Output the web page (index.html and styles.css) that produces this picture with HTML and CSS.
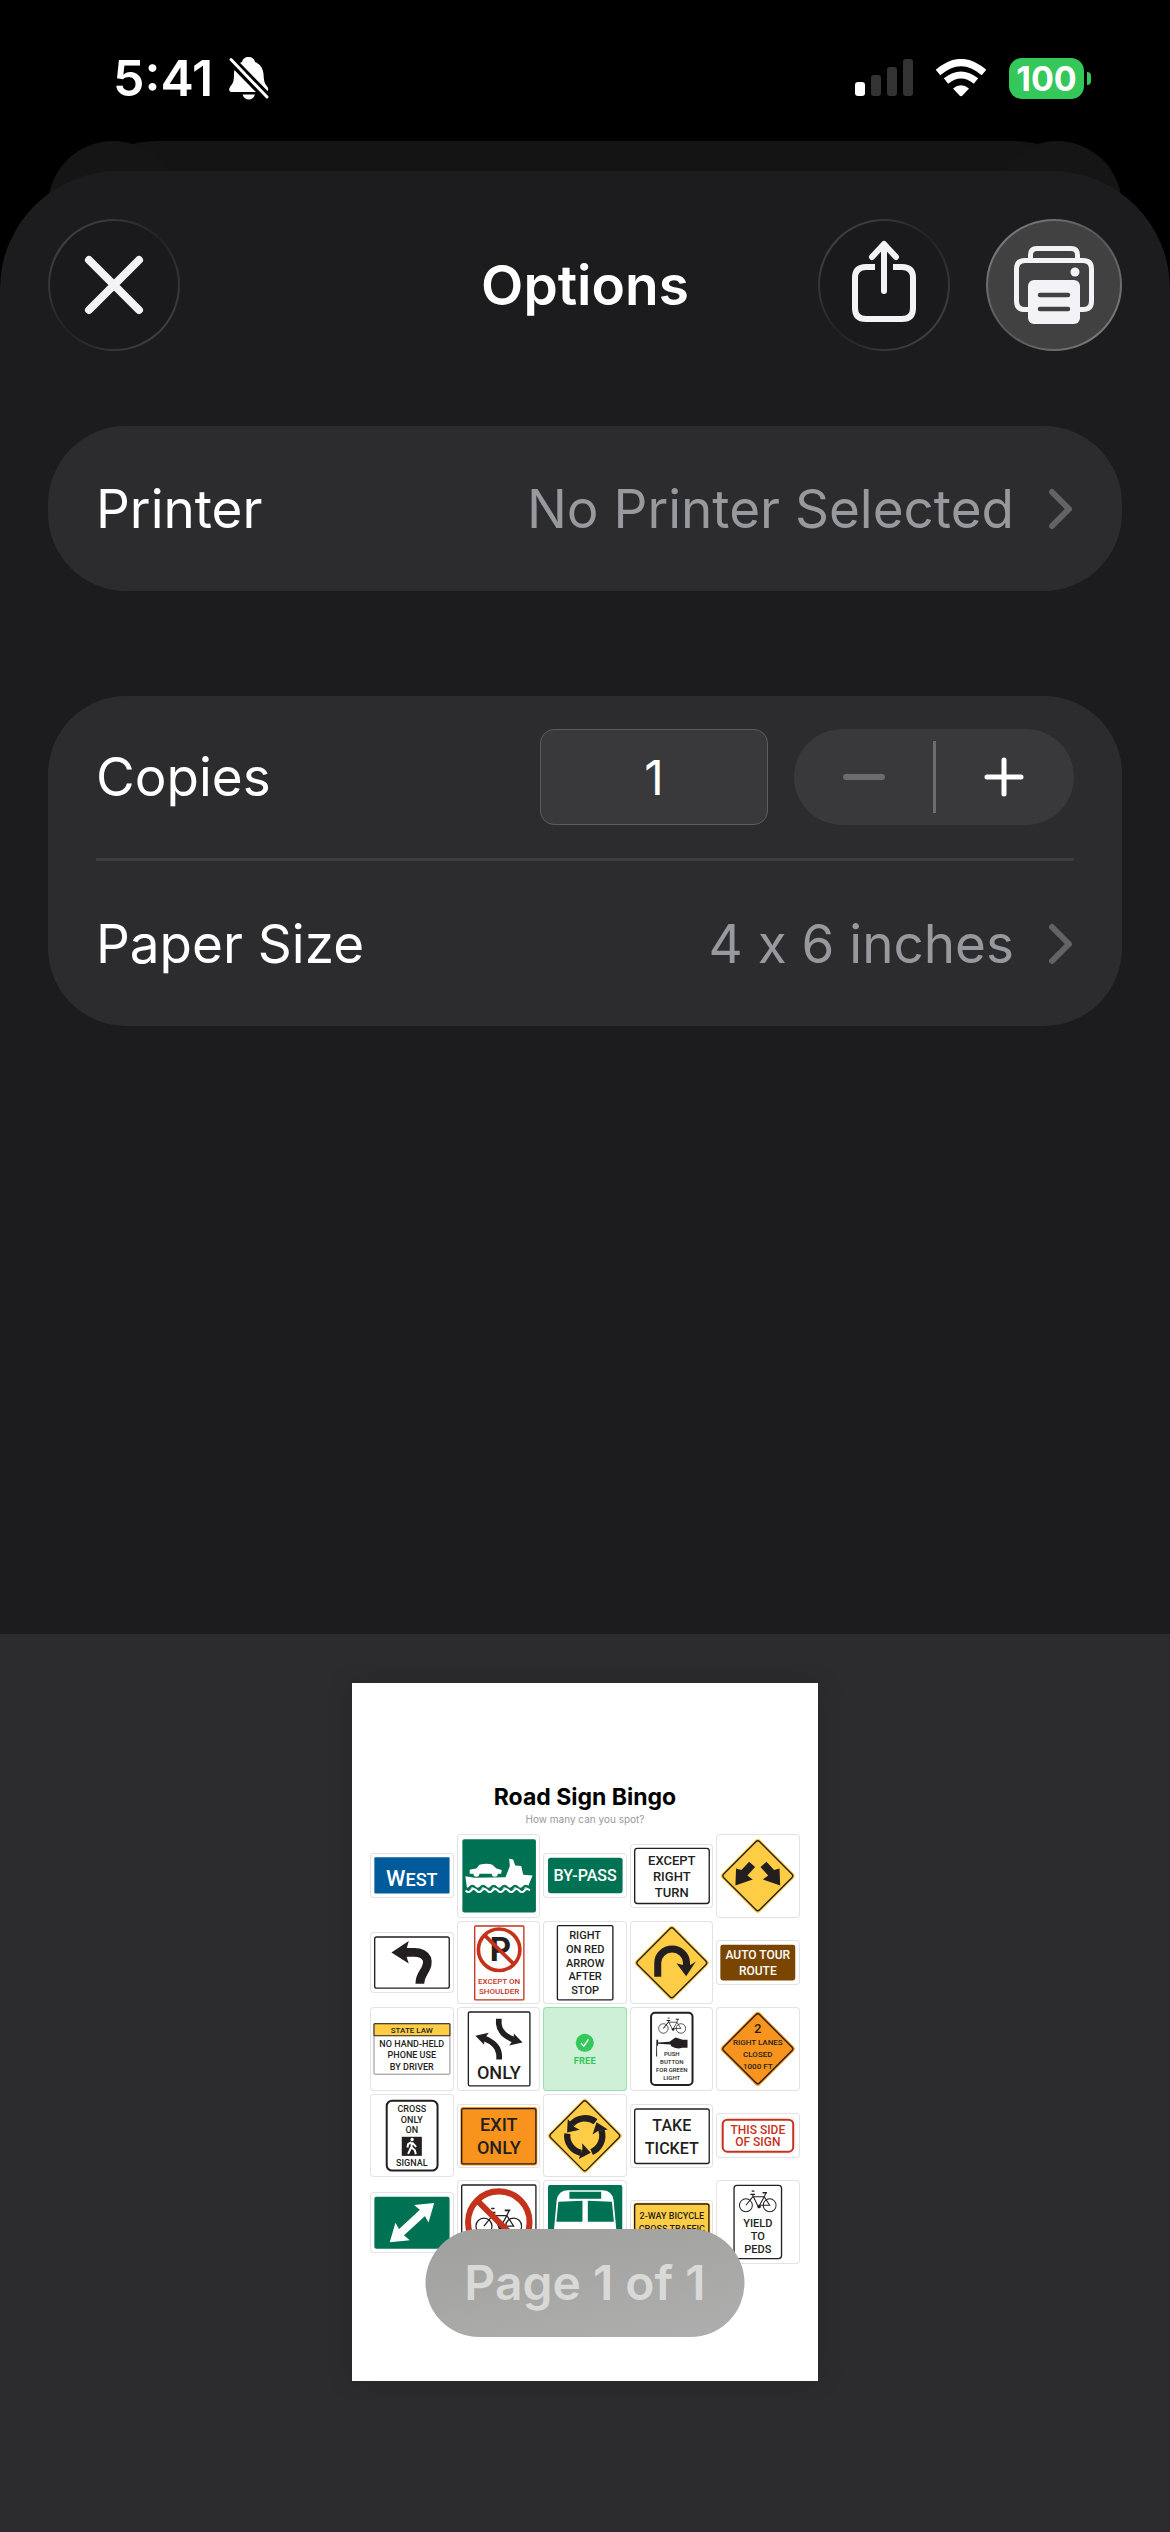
FILE: index.html
```
<!DOCTYPE html>
<html lang="en">
<head>
    <meta charset="utf-8">
    <meta name="viewport" content="width=device-width, initial-scale=1">
    <title>Print Options</title>
    <link rel="stylesheet" href="styles.css">
</head>

<body>

<!-- shapes used by more than one sign -->
<svg class="defs" width="0" height="0" aria-hidden="true">
    <symbol id="bike" viewBox="0 0 112 66">
        <g fill="none" stroke="#231f20" stroke-width="3">
            <circle cx="21" cy="44" r="19"/>
            <circle cx="91" cy="44" r="19"/>
            <path d="M21 44 L41 19 H75 L58 50 L40 12 M75 19 L91 44 H58 M80 8 L75 19 M41 19 L21 44"/>
            <path d="M34 12 H48 M70 7 H83 M38 2 H46" stroke-width="4"/>
        </g>
        <circle cx="60" cy="48" r="5" fill="#231f20"/>
    </symbol>
    <symbol id="diamond" viewBox="0 0 250 250">
        <rect x="44" y="44" width="162" height="162" rx="10" transform="rotate(45 125 125)" fill="currentColor"/>
        <rect x="49" y="49" width="152" height="152" rx="8" transform="rotate(45 125 125)" fill="none" stroke="#231f20" stroke-width="4"/>
    </symbol>
</svg>

<header class="status">
    <div class="status-left">
        <span class="time">5:41</span>
        <svg width="40" height="44" viewBox="0 0 40 44" aria-hidden="true">
            <path d="M19.500 1c3.500 0 6 2 6.500 5 5 2 8 6 8.500 12 .5 9 1.500 9.500 4 13 1.500 2.500.5 5-2 5h-34C0 36-.5 33 1 31c3-4 4-5 4-13 0-6 3-10 8-12 .5-3 3-5 6.500-5z" fill="#fff"/>
            <path d="M13.500 38.500h12.500c-1 3.500-3.500 5-6.200 5s-5.300-1.500-6.300-5z" fill="#fff"/>
            <path d="M1 3 L38 41" stroke="#000" stroke-width="9"/>
            <path d="M2 3.500 L38 41" stroke="#fff" stroke-width="3" stroke-linecap="round"/>
        </svg>
    </div>
    <div class="status-right">
        <svg width="58" height="38" viewBox="0 0 58 38" aria-hidden="true">
            <rect y="23" width="10" height="14" rx="3" fill="#fff"/>
            <g fill="#333">
                <rect x="16" y="16" width="10" height="21" rx="3"/>
                <rect x="32" y="8" width="10" height="29" rx="3"/>
                <rect x="48" y="0" width="10" height="37" rx="3"/>
            </g>
        </svg>
        <svg width="52" height="38" viewBox="0 0 52 38" aria-hidden="true">
            <g fill="none" stroke="#fff" stroke-width="7">
                <path d="M3 13.500 Q26 -6.500 49 13.500"/>
                <path d="M11 22 Q26 10 41 22"/>
            </g>
            <path d="M18 29.500 Q26 23 34 29.500 L27.500 36.500 Q26 38 24.500 36.500z" fill="#fff"/>
        </svg>
        <div class="battery"><span>100</span></div>
    </div>
</header>

<main class="stage">
    <div class="back-sheet"></div>
    <div class="sheet">
        <div class="toolbar">
            <button class="round" type="button" aria-label="Close">
                <svg width="60" height="60" viewBox="0 0 60 60"><path d="M5 5 L55 55 M55 5 L5 55" stroke="#f2f2f7" stroke-width="8" stroke-linecap="round"/></svg>
            </button>
            <h1>Options</h1>
            <div class="toolbar-end">
                <button class="round" type="button" aria-label="Share">
                    <svg class="share" width="66" height="84" viewBox="0 0 66 84" fill="none" stroke="#f2f2f7" stroke-width="6" stroke-linecap="round" stroke-linejoin="round">
                        <path d="M24 27 H15 Q4 27 4 38 V68 Q4 79 15 79 H51 Q62 79 62 68 V38 Q62 27 51 27 H42" stroke-linecap="butt"/>
                        <path d="M33 51 V5 M21 17 L33 4 L45 17"/>
                    </svg>
                </button>
                <button class="round print" type="button" aria-label="Print">
                    <svg width="82" height="80" viewBox="0 0 82 80">
                        <g fill="none" stroke="#f2f2f7" stroke-width="5">
                            <path d="M17.500 13 V10 Q17.500 3.500 24 3.500 H58 Q64.500 3.500 64.500 10 V13"/>
                            <path d="M16 64.500 H12 Q3.500 64.500 3.500 56 V24 Q3.500 15.500 12 15.500 H70 Q78.500 15.500 78.500 24 V56 Q78.500 64.500 70 64.500 H66"/>
                        </g>
                        <rect x="15" y="35" width="52" height="44" rx="6" fill="#f2f2f7"/>
                        <circle cx="62" cy="27" r="4.500" fill="#f2f2f7"/>
                        <path d="M27 50 H55 M27 64 H55" stroke="#414142" stroke-width="4.500" stroke-linecap="round"/>
                    </svg>
                </button>
            </div>
        </div>

        <section class="card">
            <button class="row" type="button">
                <span class="name">Printer</span>
                <span class="value">No Printer Selected</span>
                <svg class="chevron" width="26" height="42" viewBox="0 0 26 42"><path d="M4 4 L21 21 L4 38"/></svg>
            </button>
        </section>

        <section class="card">
            <div class="row line">
                <label class="name" for="copies">Copies</label>
                <input id="copies" type="text" inputmode="numeric" value="1">
                <div class="stepper">
                    <button type="button" aria-label="Fewer copies" disabled>
                        <svg width="42" height="42" viewBox="0 0 42 42"><path d="M3 21 H39" stroke="#6c6c70" stroke-width="6" stroke-linecap="round"/></svg>
                    </button>
                    <button type="button" aria-label="More copies">
                        <svg width="42" height="42" viewBox="0 0 42 42"><path d="M4 21 H38 M21 4 V38" stroke="#fff" stroke-width="5" stroke-linecap="round"/></svg>
                    </button>
                </div>
            </div>
            <button class="row" type="button">
                <span class="name">Paper Size</span>
                <span class="value">4 x 6 inches</span>
                <svg class="chevron" width="26" height="42" viewBox="0 0 26 42"><path d="M4 4 L21 21 L4 38"/></svg>
            </button>
        </section>
    </div>

    <section class="preview" aria-label="Preview">
        <article class="paper">
            <h2>Road Sign Bingo</h2>
            <p>How many can you spot?</p>

            <div class="bingo">
                <svg class="sign" viewBox="0 0 250 135">
                    <rect x="13" y="13" width="225" height="108" rx="3" fill="#005a9c"/>
                    <text class="white" x="125" y="98"><tspan class="s66">W</tspan><tspan class="s54">EST</tspan></text>
                </svg>

                <svg class="sign" viewBox="0 0 250 250">
                    <rect x="16" y="16" width="220" height="219" rx="6" fill="#007254"/>
                    <path d="M25 126 L52 131 L145 129 L158 96 L156 74 L168 76 L174 94 L192 96 L198 122 L226 124 L210 163 L30 163z" fill="#fff"/>
                    <path d="M38 119 V107 Q48 104 58 103 L67 92 Q90 86 106 92 L118 103 L134 108 L132 119z" fill="#fff"/>
                    <circle cx="58" cy="119" r="9" fill="#fff"/>
                    <circle cx="113" cy="119" r="9" fill="#fff"/>
                    <path d="M22 160 q8 9 16 0 t16 0 t16 0 t16 0 t16 0 t16 0 t16 0 t16 0 t16 0 t16 0 t16 0 t16 0" fill="none" stroke="#007254" stroke-width="7"/>
                    <path d="M26 169 q8 9 16 0 t16 0 t16 0 t16 0 t16 0 t16 0 t16 0 t16 0 t16 0 t16 0 t16 0 t16 0" fill="none" stroke="#fff" stroke-width="6"/>
                </svg>

                <svg class="sign" viewBox="0 0 250 135">
                    <rect x="15" y="14" width="223" height="106" rx="8" fill="#007254"/>
                    <text class="white s48" x="126" y="85">BY-PASS</text>
                </svg>

                <svg class="sign" viewBox="0 0 250 193">
                    <rect class="edge" x="14" y="13" width="223" height="165" rx="8"/>
                    <text class="s39" x="125" y="62">EXCEPT</text>
                    <text class="s39" x="125" y="110">RIGHT</text>
                    <text class="s39" x="125" y="158">TURN</text>
                </svg>

                <svg class="sign yellow" viewBox="0 0 250 250">
                    <use href="#diamond"/>
                    <path d="M99 83 L117 99 L94 124 L110 136 L58 154 L60 103 L76 108z"/>
                    <path d="M151 83 L133 99 L156 124 L140 136 L192 154 L190 103 L174 108z"/>
                </svg>

                <svg class="sign" viewBox="0 0 250 181">
                    <rect class="edge" x="14" y="15" width="223" height="153" rx="6"/>
                    <path d="M149 155 Q149 137 160 121 Q176 98 170 80 Q160 60 130 61 L105 61" fill="none" stroke="#231f20" stroke-width="26"/>
                    <path d="M64 61 L116 27 L110 48 L110 76 L116 94z"/>
                </svg>

                <svg class="sign" viewBox="0 0 250 250">
                    <rect class="edge red-line" x="53" y="15" width="147" height="221" rx="3"/>
                    <text class="bold s99" x="130" y="121">P</text>
                    <circle cx="126" cy="86" r="62" fill="none" stroke="#c4321c" stroke-width="11"/>
                    <path d="M83 43 L170 129" stroke="#c4321c" stroke-width="11"/>
                    <text class="red s24" x="126" y="187">EXCEPT ON</text>
                    <text class="red s24" x="126" y="219">SHOULDER</text>
                </svg>

                <svg class="sign" viewBox="0 0 250 250">
                    <rect class="edge" x="43" y="14" width="166" height="222" rx="4"/>
                    <text class="s33" x="126" y="54">RIGHT</text>
                    <text class="s33" x="126" y="95">ON RED</text>
                    <text class="s33" x="126" y="137">ARROW</text>
                    <text class="s33" x="126" y="177">AFTER</text>
                    <text class="s33" x="126" y="218">STOP</text>
                </svg>

                <svg class="sign yellow" viewBox="0 0 250 250">
                    <use href="#diamond"/>
                    <path d="M83 167 V125 a43 41 0 0 1 86 0 V140" fill="none" stroke="#231f20" stroke-width="21"/>
                    <path d="M139 126 L155 131 H182 L197 121 L168 165z"/>
                </svg>

                <svg class="sign" viewBox="0 0 250 135">
                    <rect x="13" y="14" width="224" height="107" rx="7" fill="#7a4500"/>
                    <text class="white s36" x="125" y="57">AUTO TOUR</text>
                    <text class="white s36" x="125" y="105">ROUTE</text>
                </svg>

                <svg class="sign" viewBox="0 0 250 250">
                    <rect x="12" y="50" width="227" height="151" rx="2" fill="#fff" stroke="#555" stroke-width="2"/>
                    <rect x="12" y="50" width="227" height="36" rx="2" fill="#ffcd45" stroke="#231f20" stroke-width="3"/>
                    <text class="s24" x="125" y="77">STATE LAW</text>
                    <text class="s27" x="125" y="120">NO HAND-HELD</text>
                    <text class="s27" x="125" y="154">PHONE USE</text>
                    <text class="s27" x="125" y="188">BY DRIVER</text>
                </svg>

                <svg class="sign" viewBox="0 0 250 250">
                    <rect class="edge" x="34" y="15" width="184" height="221" rx="4"/>
                    <path d="M125 35 V50 Q128 82 170 98" fill="none" stroke="#231f20" stroke-width="17"/>
                    <path d="M196 106 L170 79 L169 97 L156 115z"/>
                    <path d="M126 157 V142 Q123 110 81 94" fill="none" stroke="#231f20" stroke-width="17"/>
                    <path d="M55 86 L81 113 L82 95 L95 77z"/>
                    <text class="s54" x="125" y="216">ONLY</text>
                </svg>

                <svg class="sign free" viewBox="0 0 250 250">
                    <circle cx="125" cy="107" r="27" fill="#34c759"/>
                    <path d="M114 108 L122 117 L136 97" fill="none" stroke="#fff" stroke-width="4"/>
                    <text class="s27" x="125" y="169">FREE</text>
                </svg>

                <svg class="sign" viewBox="0 0 250 250">
                    <rect class="edge" x="63" y="17" width="124" height="216" rx="12" stroke-width="6"/>
                    <use href="#bike" x="84" y="31" width="84" height="50"/>
                    <path d="M79 98 H84 V106 L118 104 L136 91 L158 98 H172 V122 H156 Q140 128 122 117 V112 L84 110 V116 H81 V148 H78z"/>
                    <text class="s18" x="125" y="148">PUSH</text>
                    <text class="s18" x="125" y="171">BUTTON</text>
                    <text class="s18" x="125" y="195">FOR GREEN</text>
                    <text class="s18" x="125" y="219">LIGHT</text>
                </svg>

                <svg class="sign orange" viewBox="0 0 250 250">
                    <use href="#diamond"/>
                    <text class="s39" x="125" y="78">2</text>
                    <text class="s24" x="125" y="114">RIGHT LANES</text>
                    <text class="s24" x="125" y="149">CLOSED</text>
                    <text class="s24" x="125" y="184">1000 FT</text>
                </svg>

                <svg class="sign" viewBox="0 0 250 250">
                    <rect class="edge" x="50" y="20" width="152" height="209" rx="16" stroke-width="6"/>
                    <text class="s27" x="125" y="55">CROSS</text>
                    <text class="s27" x="125" y="86">ONLY</text>
                    <text class="s27" x="125" y="117">ON</text>
                    <rect x="95" y="128" width="60" height="57"/>
                    <circle cx="126" cy="136" r="5" fill="#fff"/>
                    <path d="M125 144 L124 160 M124 144 L114 150 L112 160 M127 146 L138 158 M123 160 L114 179 M125 160 L134 168 L137 180" fill="none" stroke="#fff" stroke-width="6"/>
                    <text class="s27" x="125" y="215">SIGNAL</text>
                </svg>

                <svg class="sign" viewBox="0 0 250 192">
                    <rect x="10" y="9" width="230" height="175" rx="8" fill="#f8931d"/>
                    <rect class="edge clear" x="14" y="14" width="222" height="165" rx="5"/>
                    <text class="s54" x="125" y="82">EXIT</text>
                    <text class="s54" x="125" y="149">ONLY</text>
                </svg>

                <svg class="sign yellow" viewBox="0 0 250 250">
                    <use href="#diamond"/>
                    <g id="swirl">
                        <path d="M157 83 A53 53 0 0 0 86 90" fill="none" stroke="#231f20" stroke-width="19"/>
                        <path d="M72 115 L74 75 L82 84 L94 99 L110 107z"/>
                    </g>
                    <use href="#swirl" transform="rotate(120 125 125)"/>
                    <use href="#swirl" transform="rotate(240 125 125)"/>
                </svg>

                <svg class="sign" viewBox="0 0 250 192">
                    <rect class="edge" x="14" y="15" width="223" height="163" rx="6"/>
                    <text class="s48" x="125" y="82">TAKE</text>
                    <text class="s48" x="125" y="149">TICKET</text>
                </svg>

                <svg class="sign" viewBox="0 0 250 136">
                    <rect x="13" y="13" width="225" height="109" rx="18" fill="none" stroke="#eee" stroke-width="2"/>
                    <rect class="edge red-line" x="20" y="20" width="211" height="96" rx="14" stroke-width="6"/>
                    <text class="red s36" x="125" y="62">THIS SIDE</text>
                    <text class="red s36" x="125" y="100">OF SIGN</text>
                </svg>

                <svg class="sign" viewBox="0 0 250 182">
                    <rect x="13" y="14" width="225" height="156" rx="6" fill="#007254"/>
                    <path d="M163 57 L88 126" stroke="#fff" stroke-width="24"/>
                    <path d="M192 33 L132 39 L155 58 L162 68 L175 91z M59 150 L119 144 L96 125 L89 115 L76 92z" fill="#fff"/>
                </svg>

                <svg class="sign" viewBox="0 0 250 250">
                    <rect class="edge" x="14" y="15" width="222" height="221" rx="4"/>
                    <use href="#bike" x="54" y="82" width="142" height="84"/>
                    <circle cx="125" cy="126" r="92" fill="none" stroke="#c4321c" stroke-width="18"/>
                    <path d="M60 61 L190 191" stroke="#c4321c" stroke-width="18"/>
                </svg>

                <svg class="sign" viewBox="0 0 250 250">
                    <rect x="15" y="15" width="222" height="221" rx="6" fill="#007254"/>
                    <path d="M28 200 L41 60 Q46 31 75 31 H177 Q206 31 211 60 L224 200z" fill="#fff"/>
                    <path d="M79 35 H174 V56 H79z M46 65 L118 62 V125 H40z M206 65 L134 62 V125 H212z" fill="#007254"/>
                </svg>

                <svg class="sign" viewBox="0 0 250 132">
                    <rect x="10" y="8" width="230" height="116" rx="8" fill="#ffcd45"/>
                    <rect class="edge clear" x="14" y="12" width="222" height="108" rx="6"/>
                    <text class="s27" x="125" y="57">2-WAY BICYCLE</text>
                    <text class="s27" x="125" y="95">CROSS TRAFFIC</text>
                </svg>

                <svg class="sign" viewBox="0 0 250 250">
                    <rect class="edge" x="54" y="16" width="142" height="219" rx="9"/>
                    <use href="#bike" x="68" y="31" width="114" height="67"/>
                    <text class="s33" x="125" y="140">YIELD</text>
                    <text class="s33" x="125" y="178">TO</text>
                    <text class="s33" x="125" y="217">PEDS</text>
                </svg>
            </div>

            <div class="page-count">Page 1 of 1</div>
        </article>
    </section>
</main>

</body>
</html>
```
FILE: styles.css
```
* {
    box-sizing: border-box;
}

body {
    margin: 0;
    min-height: 100vh;
    display: flex;
    flex-direction: column;
    background: #000;
    color: #fff;
    font-family: Inter, "Liberation Sans", sans-serif;
}

h1, h2, p {
    margin: 0;
}

button, input {
    margin: 0;
    padding: 0;
    border: 0;
    color: inherit;
    background: none;
    font: inherit;
}

svg {
    display: block;
    flex: none;
}

.defs {
    position: absolute;
}

/* status bar */
.status {
    display: flex;
    justify-content: space-between;
    align-items: center;
    height: 141px;
    padding: 15px 79px 0 113px;
}

.status-left {
    display: flex;
    align-items: center;
    gap: 16px;
}

.time {
    font-size: 50px;
    font-weight: 600;
}

.status-right {
    display: flex;
    align-items: center;
    gap: 22px;
}

.battery {
    position: relative;
    width: 75px;
    height: 41px;
    margin-right: 7px;
    border-radius: 13px;
    background: #34c759;
    font-size: 34px;
    line-height: 41px;
    font-weight: 700;
    text-align: center;
}

.battery::after {
    content: "";
    position: absolute;
    right: -7px;
    top: 14px;
    width: 4px;
    height: 13px;
    border-radius: 0 4px 4px 0;
    background: #34c759;
}

/* sheets */
.stage {
    position: relative;
    flex: 1;
    display: flex;
    flex-direction: column;
    padding-top: 30px;
}

.back-sheet {
    position: absolute;
    top: 0;
    left: 48px;
    right: 48px;
    height: 140px;
    border-radius: 110px 110px 0 0;
    background: #141414;
}

.back-sheet::before,
.back-sheet::after {
    content: "";
    position: absolute;
    top: 0;
    left: 0;
    width: 130px;
    height: 130px;
    border-radius: 50%;
    background: #151516;
}

.back-sheet::after {
    left: auto;
    right: 0;
}

.sheet {
    position: relative;
    flex: 1;
    padding: 48px 48px 0;
    border-radius: 118px 118px 0 0;
    background: #1c1c1e;
}

.toolbar {
    display: grid;
    grid-template-columns: 1fr auto 1fr;
    align-items: center;
    margin-bottom: 75px;
}

.toolbar h1 {
    font-size: 55px;
    line-height: 66px;
    font-weight: 600;
}

.toolbar-end {
    display: flex;
    justify-content: flex-end;
    gap: 36px;
}

.round {
    display: flex;
    align-items: center;
    justify-content: center;
    width: 132px;
    height: 132px;
    border: 2px solid transparent;
    border-radius: 50%;
    background: linear-gradient(#1a1a1c, #1a1a1c) padding-box,
                linear-gradient(135deg, #4a4a4c, #222224 50%, #4a4a4c) border-box;
}

.share {
    margin-bottom: 6px;
}

.round.print {
    width: 136px;
    background: linear-gradient(#414142, #414142) padding-box,
                linear-gradient(135deg, #858587, #555557 50%, #858587) border-box;
}

.card {
    margin-bottom: 105px;
    padding: 0 48px;
    border-radius: 78px;
    background: #2c2c2e;
}

.row {
    display: flex;
    align-items: center;
    width: 100%;
    height: 165px;
    font-size: 53px;
    line-height: 66px;
    text-align: left;
}

.row.line {
    border-bottom: 3px solid #3d3d40;
}

.name {
    flex: 1;
}

/* keep the typed x, Inter swaps it for a multiplication sign */
.value {
    color: #98989f;
    font-feature-settings: "calt" 0;
}

.chevron {
    margin-left: 34px;
}

.chevron path {
    fill: none;
    stroke: #636366;
    stroke-width: 6;
    stroke-linecap: round;
    stroke-linejoin: round;
}

.row input {
    width: 228px;
    height: 96px;
    margin-right: 26px;
    border: 1px solid #5c5c5f;
    border-radius: 14px;
    background: #39393b;
    font-size: 48px;
    text-align: center;
}

.stepper {
    display: flex;
    width: 280px;
    height: 96px;
    border-radius: 48px;
    background: #39393b;
}

.stepper button {
    position: relative;
    flex: 1;
    display: flex;
    align-items: center;
    justify-content: center;
}

.stepper button + button::before {
    content: "";
    position: absolute;
    left: -1px;
    top: 12px;
    bottom: 12px;
    width: 3px;
    background: #6c6c70;
}

/* preview */
.preview {
    position: relative;
    display: flex;
    justify-content: center;
    padding: 49px 0 151px;
    background: #2c2c2e;
}

.paper {
    position: relative;
    width: 466px;
    height: 698px;
    padding: 99px 18px 0;
    background: #fff;
    color: #000;
    text-align: center;
    box-shadow: 0 0 24px rgba(0, 0, 0, 0.15);
}

.paper h2 {
    font-size: 23px;
    line-height: 30px;
    font-weight: 700;
}

.paper p {
    margin-bottom: 7px;
    color: #999;
    font-size: 10px;
    line-height: 15px;
}

.bingo {
    display: grid;
    grid-template-columns: repeat(5, 1fr);
    grid-template-rows: repeat(5, 1fr);
    gap: 3px;
    align-items: center;
    aspect-ratio: 1;
}

.sign {
    width: 100%;
    border-radius: 4px;
    box-shadow: inset 0 0 0 1px #e3e3e5;
    fill: #231f20;
}

.sign text {
    font-family: Roboto, "Liberation Sans", sans-serif;
    font-weight: 500;
    text-anchor: middle;
}

.sign .bold {
    font-weight: 700;
}

.sign .white {
    fill: #fff;
}

.sign .red {
    fill: #c4321c;
}

.edge {
    fill: #fff;
    stroke: #231f20;
}

.edge:not([stroke-width]) {
    stroke-width: 4px;
}

.edge.clear {
    fill: none;
}

.edge.red-line {
    stroke: #c4321c;
}

.yellow {
    color: #ffcd45;
}

.orange {
    color: #f8931d;
}

.free {
    background: #cdf0d6;
    box-shadow: inset 0 0 0 1px #98e0aa;
}

.sign.free text {
    fill: #34c759;
    font-family: Inter, sans-serif;
    font-weight: 700;
}

/* lettering on the signs, three units to the pixel */
.s18 { font-size: 18px; }
.s24 { font-size: 24px; }
.s27 { font-size: 27px; }
.s33 { font-size: 33px; }
.s36 { font-size: 36px; }
.s39 { font-size: 39px; }
.s48 { font-size: 48px; }
.s54 { font-size: 54px; }
.s66 { font-size: 66px; }
.s99 { font-size: 99px; }

.page-count {
    position: absolute;
    left: 50%;
    bottom: 44px;
    width: 319px;
    transform: translateX(-50%);
    border-radius: 54px;
    background: linear-gradient(170deg, #a0a19e, #aeaeae);
    color: #d9d9d8;
    font-size: 48px;
    line-height: 108px;
    font-weight: 600;
    white-space: nowrap;
}
```
